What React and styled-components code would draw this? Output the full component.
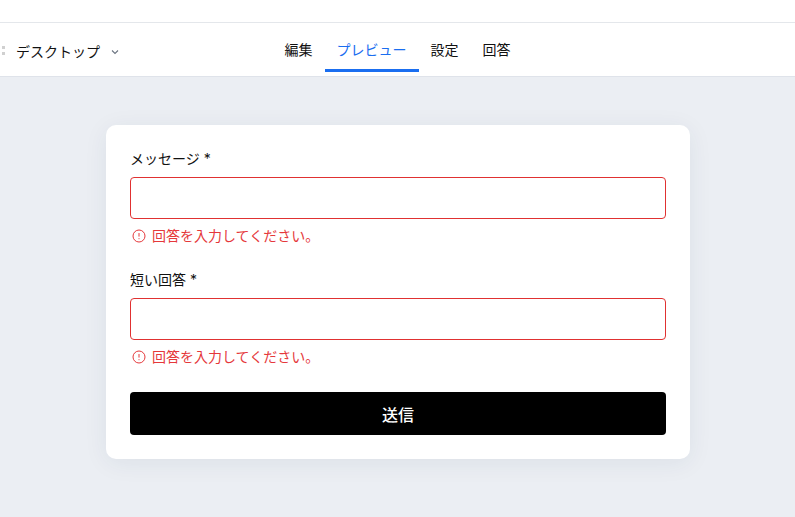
import React from "react";
import styled, { createGlobalStyle } from "styled-components";

const GlobalStyle = createGlobalStyle`
  html, body {
    margin: 0;
    padding: 0;
    height: 100%;
    overflow: hidden;
    background: #ebeef3;
    font-family: "Inter", "Noto Sans CJK JP", sans-serif;
  }
  * { box-sizing: border-box; }
`

const Page = styled.div`
  width: 795px;
  height: 517px;
  display: flex;
  flex-direction: column;
`

const TopBar = styled.div`
  height: 23px;
  background: #fff;
  border-bottom: 1px solid #e4e7eb;
`

const Header = styled.header`
  height: 54px;
  display: flex;
  background: #fff;
  border-bottom: 1px solid #dfe3ea;
`

const DeviceGroup = styled.div`
  width: 272.5px;
  display: flex;
  align-items: center;
  padding-left: 2px;
  padding-top: 2px;
  font-size: 14px;
  color: #111;
`

const Dots = styled.span`
  width: 14px;
  display: flex;
  flex-direction: column;
  gap: 3px;

  i {
    width: 3px;
    height: 3px;
    background: #d0d0d0;
  }
`

const Chevron = styled.svg`
  width: 8px;
  height: 8px;
  margin-left: 11px;
  margin-top: 2px;
  fill: none;
  stroke: #6b7480;
  stroke-width: 1.1;
`

const Tabs = styled.nav`
  display: flex;
  height: 49px;
`

const Tab = styled.div`
  padding: 6px 12px 0;
  display: flex;
  align-items: center;
  font-size: 14px;
  color: ${props => (props.$active ? "#1a6ef0" : "#111")};
  border-bottom: 3px solid ${props => (props.$active ? "#1a6ef0" : "transparent")};
`

const Main = styled.main`
  flex: 1;
  display: flex;
  justify-content: center;
  align-items: flex-start;
  padding-top: 48px;
  padding-left: 1px;
`

const Card = styled.form`
  width: 584px;
  height: 334px;
  padding: 24px;
  background: #fff;
  border-radius: 10px;
  box-shadow: 0 4px 24px rgba(30, 50, 80, 0.07);
`

const Field = styled.div`
  margin-bottom: 25px;
`

const Label = styled.label`
  display: block;
  height: 20px;
  line-height: 20px;
  margin-bottom: 8px;
  font-size: 14px;
  color: #111;
`

const Input = styled.input`
  display: block;
  width: 100%;
  height: 42px;
  border: 1px solid #e03131;
  border-radius: 4px;
  background: #fff;
  outline: none;
`

const ErrorRow = styled.div`
  display: flex;
  align-items: center;
  gap: 6px;
  margin-top: 6px;
  height: 20px;
  padding-left: 2px;
  font-size: 14px;
  color: #e5383b;
`

const ErrorIcon = styled.svg`
  width: 14px;
  height: 14px;
  margin-top: 2px;
  fill: none;
  stroke: currentColor;
  stroke-width: 1;
`

const SubmitButton = styled.button`
  display: block;
  width: 100%;
  height: 43px;
  margin-top: 26px;
  border: none;
  border-radius: 4px;
  background: #000;
  color: #fff;
  font-family: inherit;
  font-size: 16px;
  font-weight: 500;
`

const AlertIcon = () => (
  <ErrorIcon viewBox="0 0 14 14">
    <circle cx="7" cy="7" r="6" />
    <path d="M7 4v3.6M7 9.2v1" />
  </ErrorIcon>
)

const fields = ["メッセージ *", "短い回答 *"]

const App = () => {
  return (
    <Page>
      <GlobalStyle />
      <TopBar />
      <Header>
        <DeviceGroup>
          <Dots><i /><i /></Dots>
          デスクトップ
          <Chevron viewBox="0 0 8 8"><path d="M1 2.5 4 5.5l3-3" /></Chevron>
        </DeviceGroup>
        <Tabs>
          <Tab>編集</Tab>
          <Tab $active>プレビュー</Tab>
          <Tab>設定</Tab>
          <Tab>回答</Tab>
        </Tabs>
      </Header>
      <Main>
        <Card onSubmit={e => e.preventDefault()}>
          {fields.map(label => (
            <Field key={label}>
              <Label>{label}</Label>
              <Input type="text" />
              <ErrorRow>
                <AlertIcon />
                回答を入力してください。
              </ErrorRow>
            </Field>
          ))}
          <SubmitButton type="submit">送信</SubmitButton>
        </Card>
      </Main>
    </Page>
  )
}

export default App
